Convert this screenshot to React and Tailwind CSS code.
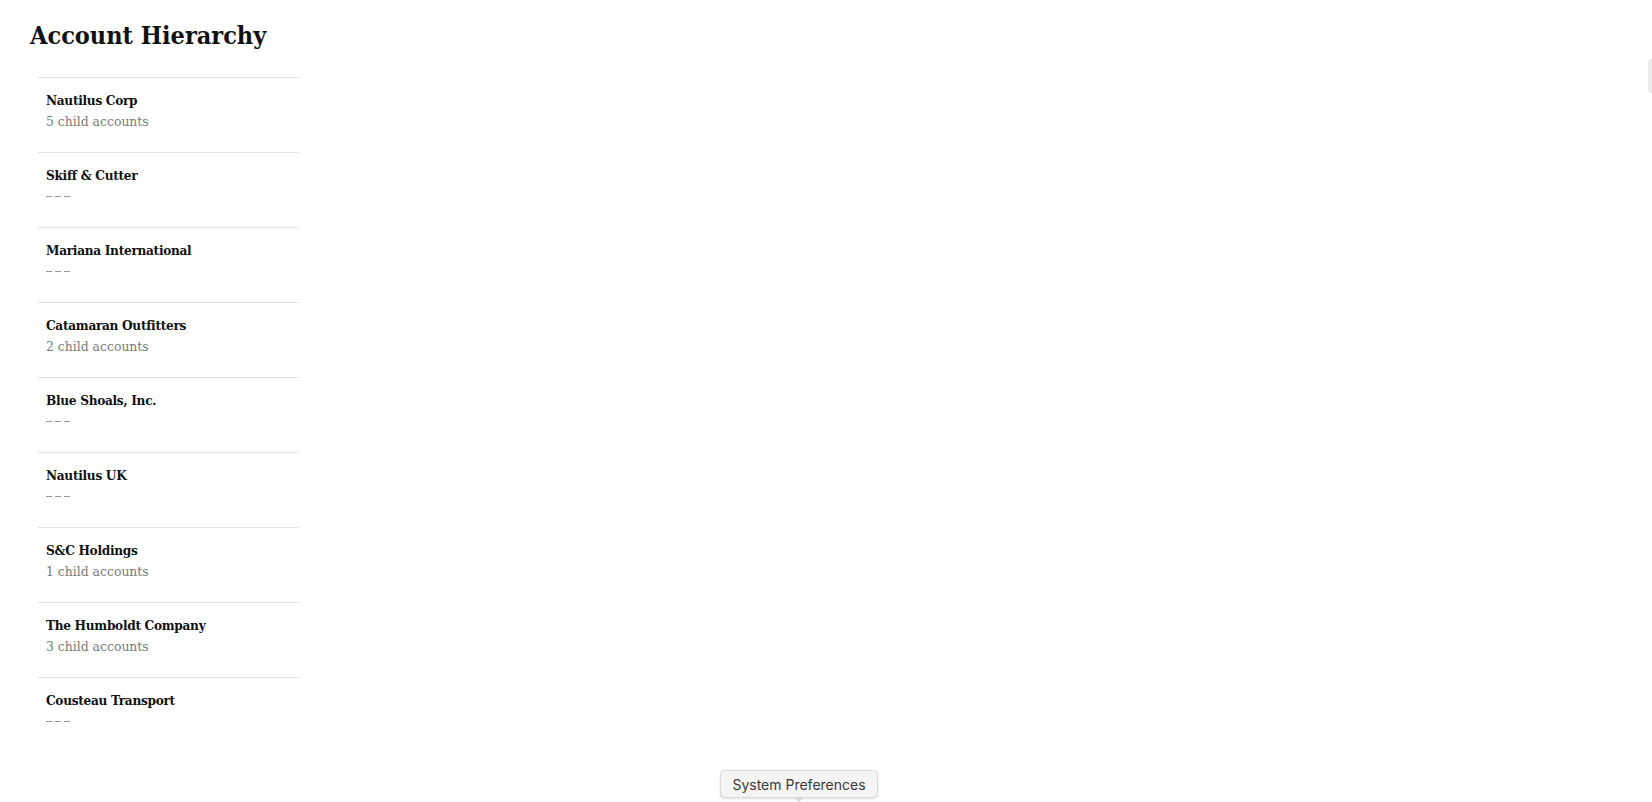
const accounts = [
  { name: 'Nautilus Corp', children: 5 },
  { name: 'Skiff & Cutter', children: 0 },
  { name: 'Mariana International', children: 0 },
  { name: 'Catamaran Outfitters', children: 2 },
  { name: 'Blue Shoals, Inc.', children: 0 },
  { name: 'Nautilus UK', children: 0 },
  { name: 'S&C Holdings', children: 1 },
  { name: 'The Humboldt Company', children: 3 },
  { name: 'Cousteau Transport', children: 0 },
];

function AccountRow({ name, children }) {
  return (
    <li className="h-[75px] border-t border-[#e2e2e2] px-2 pt-[12px]">
      <div className="text-[13.5px] leading-5 font-bold tracking-[-0.3px] text-[#111]">{name}</div>
      <div className="mt-px text-[13.8px] leading-5 text-[#7a7a7a]">
        {children > 0 ? (
          `${children} child accounts`
        ) : (
          <span className="flex h-5 items-center gap-[3px]">
            <span className="h-px w-[6px] bg-[#999]" />
            <span className="h-px w-[6px] bg-[#999]" />
            <span className="h-px w-[6px] bg-[#999]" />
          </span>
        )}
      </div>
    </li>
  );
}

export default function App() {
  return (
    <div
      className="relative h-[802px] w-full overflow-hidden bg-white"
      style={{ fontFamily: '"DejaVu Serif Condensed", "Liberation Serif", serif' }}
    >
      <div className="pl-[30px] pt-[19px]">
        <h1 className="text-[25px] leading-[34px] font-bold text-[#111]">Account Hierarchy</h1>
        <ul className="mt-[24px] ml-[8px] w-[261px]">
          {accounts.map((a) => (
            <AccountRow key={a.name} name={a.name}>
              {a.children}
            </AccountRow>
          ))}
        </ul>
      </div>

      {/* scroll handle sliver */}
      <div className="absolute right-0 top-[59px] h-[34px] w-[4px] rounded-l bg-[#ececec]" />

      {/* dock label */}
      <div className="absolute left-[720px] top-[770px] flex flex-col items-center">
        <div
          className="flex h-[28px] w-[158px] items-center justify-center rounded-[5px] border border-[#d9d9d9] bg-[#f5f5f5] text-[14px] text-[#3a3a3a] shadow-sm"
          style={{ fontFamily: 'Inter, "Liberation Sans", sans-serif' }}
        >
          System Preferences
        </div>
        <div className="-mt-[1px] h-0 w-0 border-x-[6px] border-t-[5px] border-x-transparent border-t-[#d9d9d9]" />
      </div>
    </div>
  );
}
